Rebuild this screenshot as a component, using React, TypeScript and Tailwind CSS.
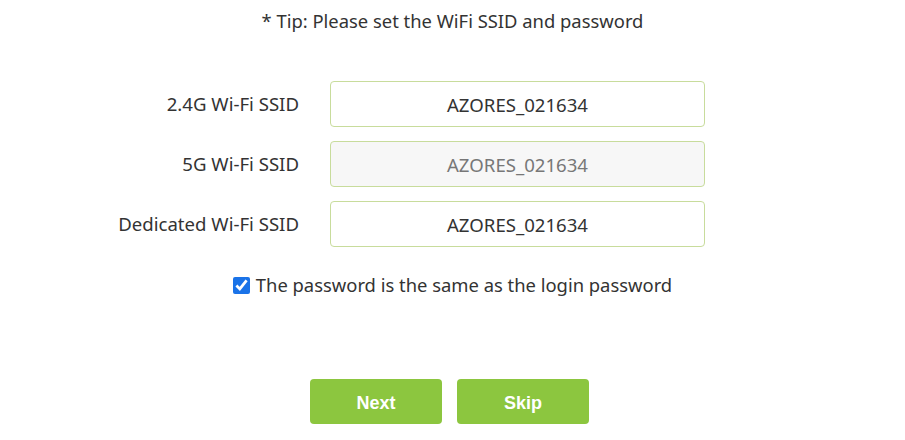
import { useState } from "react";

const fields = [
  { label: "2.4G Wi-Fi SSID", value: "AZORES_021634", disabled: false },
  { label: "5G Wi-Fi SSID", value: "AZORES_021634", disabled: true },
  { label: "Dedicated Wi-Fi SSID", value: "AZORES_021634", disabled: false },
];

const App = () => {
  const [same, setSame] = useState(true);

  return (
    <div className="w-[905px] h-[440px] bg-white text-[#333] font-['Noto_Sans','Open_Sans',sans-serif] overflow-hidden">
      <p className="pt-[9px] text-center text-[18.4px] leading-[24px]">
        * Tip: Please set the WiFi SSID and password
      </p>

      {/* SSID fields */}
      <div className="mt-[48px] flex flex-col gap-[14px]">
        {fields.map((f) => (
          <div key={f.label} className="flex items-center">
            <label className="w-[299px] text-right text-[18.6px]">{f.label}</label>
            <input
              className={`ml-[31px] w-[375px] h-[46px] rounded-[4px] border border-[#c8dc9c] text-center text-[18.6px] outline-none ${
                f.disabled ? "bg-[#f7f7f7] text-[#777]" : "bg-white text-[#333]"
              }`}
              defaultValue={f.value}
              disabled={f.disabled}
            />
          </div>
        ))}
      </div>

      <label className="mt-[26px] flex items-center justify-center gap-[6px] text-[18.4px] leading-[24px]">
        <input
          type="checkbox"
          className="w-[17px] h-[17px] m-0 accent-[#1a73e8]"
          checked={same}
          onChange={(e) => setSame(e.target.checked)}
        />
        The password is the same as the login password
      </label>

      <div className="mt-[82px] flex justify-center gap-[15px] pr-[6px]">
        <button className="w-[132px] h-[45px] pt-[3px] rounded-[4px] bg-[#8cc63f] text-white font-bold text-[18px] font-['Liberation_Sans',Arial,sans-serif]">
          Next
        </button>
        <button className="w-[132px] h-[45px] pt-[3px] rounded-[4px] bg-[#8cc63f] text-white font-bold text-[18px] font-['Liberation_Sans',Arial,sans-serif]">
          Skip
        </button>
      </div>
    </div>
  );
};

export default App;
